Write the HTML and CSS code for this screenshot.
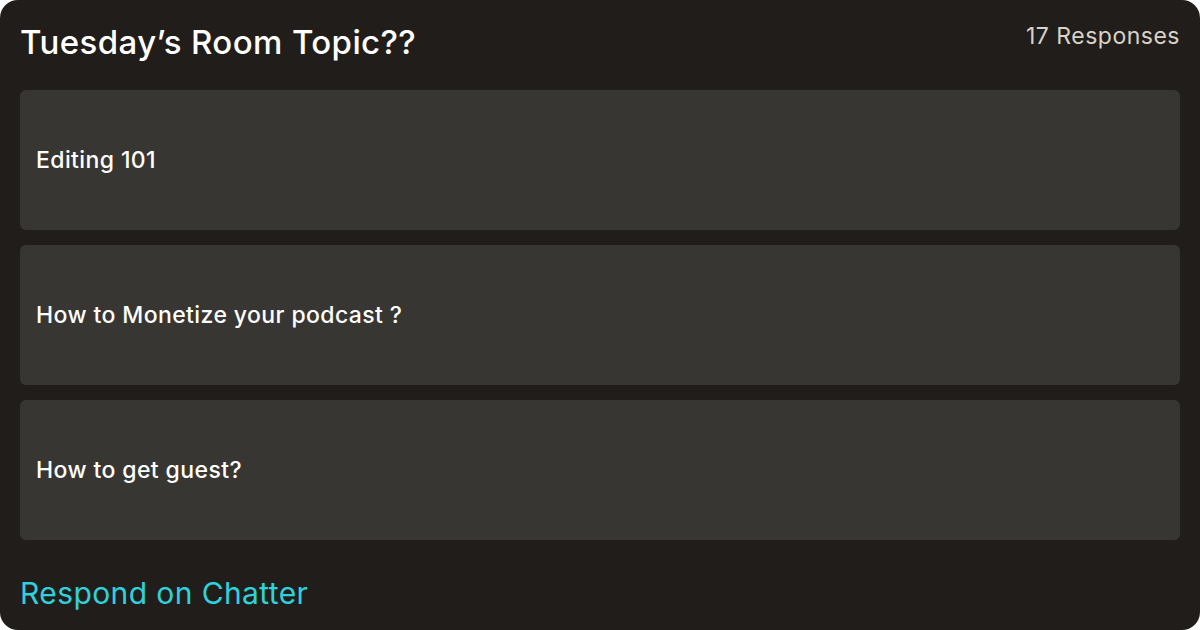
FILE: index.html
```html
<!DOCTYPE html>
<html>
<head>
<meta charset="utf-8">
<link rel="stylesheet" href="styles.css">
</head>
<body>
<div class="card">
  <div class="header">
    <h1 class="title">Tuesday’s Room Topic??</h1>
    <span class="count">17 Responses</span>
  </div>
  <div class="options">
    <div class="option">Editing 101</div>
    <div class="option">How to Monetize your podcast ?</div>
    <div class="option">How to get guest?</div>
  </div>
  <a class="link">Respond on Chatter</a>
</div>
</body>
</html>
```

FILE: styles.css
```css
html, body {
  margin: 0;
  padding: 0;
  background: #ffffff;
}
.card {
  width: 1200px;
  height: 630px;
  box-sizing: border-box;
  background: #201d1a;
  border-radius: 18px;
  padding: 20px 20px 0 20px;
  font-family: Inter, "Liberation Sans", sans-serif;
  display: flex;
  flex-direction: column;
}
.header {
  display: flex;
  justify-content: space-between;
  align-items: flex-start;
  height: 70px;
}
.title {
  margin: 0;
  font-size: 33px;
  font-weight: 500;
  color: #ffffff;
  letter-spacing: 0.4px;
  line-height: 44px;
}
.count {
  font-size: 23px;
  color: #d8d2c8;
  line-height: 32px;
  letter-spacing: 0.5px;
}
.options {
  display: flex;
  flex-direction: column;
  gap: 15px;
}
.option {
  height: 140px;
  background: #383632;
  border-radius: 6px;
  display: flex;
  align-items: center;
  padding-left: 16px;
  font-size: 23px;
  font-weight: 500;
  color: #ffffff;
  letter-spacing: 0.4px;
}
.link {
  margin-top: 33px;
  font-size: 30px;
  color: #2fd2dc;
  letter-spacing: 0.4px;
  line-height: 40px;
}
```
